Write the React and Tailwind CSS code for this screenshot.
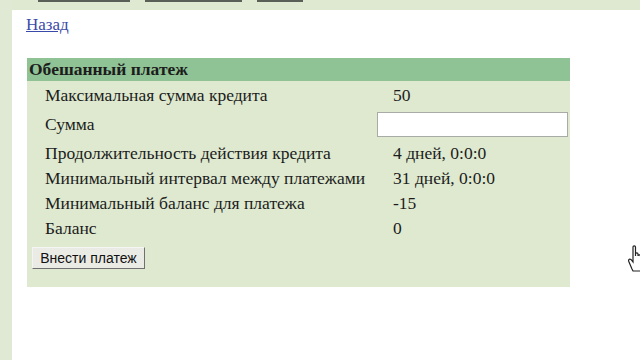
export default function App() {
  const rows = [
    ['Максимальная сумма кредита', '50'],
    ['Сумма', null],
    ['Продолжительность действия кредита', '4 дней, 0:0:0'],
    ['Минимальный интервал между платежами', '31 дней, 0:0:0'],
    ['Минимальный баланс для платежа', '-15'],
    ['Баланс', '0'],
  ];

  return (
    <div className="relative flex h-[360px] w-[640px] overflow-hidden bg-white text-[#1c1c1c]" style={{ fontFamily: '"Liberation Serif", "Times New Roman", serif' }}>
      {/* левая полоса */}
      <div className="w-[12px] shrink-0 bg-[#dfe9d3]"></div>

      <div className="flex flex-1 flex-col">
        {/* верхняя панель с кнопками (обрезана) */}
        <div className="flex h-[10px] items-start bg-[#dfe8d1]">
          <div className="ml-[26px] h-[2px] w-[92px] bg-[#5a5f58]"></div>
          <div className="ml-[15px] h-[2px] w-[97px] bg-[#5a5f58]"></div>
          <div className="ml-[15px] h-[2px] w-[46px] bg-[#5a5f58]"></div>
        </div>

        <a href="#" className="ml-[14px] mt-[6px] w-fit text-[17px] leading-[18px] text-[#3a4aa8] underline">
          Назад
        </a>

        <div className="ml-[15px] mt-[24px] w-[543px] bg-[#dee9cf] pb-[17px]">
          <div className="flex h-[23px] items-center bg-[#8fc294] pl-[2px] text-[17.5px] font-bold">
            Обешанный платеж
          </div>
          <div className="pt-[2px]">
            {rows.map(([label, value]) => (
              <div key={label} className={`flex items-center text-[17.5px] ${value === null ? 'h-[33px]' : 'h-[25px]'}`}>
                <div className="w-[350px] shrink-0 pl-[18px]">{label}</div>
                {value === null ? (
                  <input type="text" className="h-[25px] w-[191px] border border-[#a9aca6] bg-white outline-none" />
                ) : (
                  <div className="pl-[16px]">{value}</div>
                )}
              </div>
            ))}
          </div>
          <button
            className="ml-[5px] mt-[6px] h-[22px] w-[113px] border border-t-[#f4f4f4] border-l-[#f4f4f4] border-b-[#707070] border-r-[#707070] bg-[#ebebe6] text-[14px] text-[#111]"
            style={{ fontFamily: '"Liberation Sans", Arial, sans-serif' }}
          >
            Внести платеж
          </button>
        </div>
      </div>

      {/* курсор */}
      <svg className="absolute left-[627px] top-[243px]" width="16" height="30" viewBox="0 0 16 30" fill="white" stroke="#222" strokeWidth="1.2">
        <path d="M5 26 L2 19 C1 17 2 15.5 4 16.5 L6 19 L6 4 C6 2.5 8.5 2.5 8.5 4 L8.5 13 L8.5 11 C8.5 9.5 11 9.5 11 11 L11 13 C11 11.5 13.5 11.5 13.5 13 L16 13 L16 28 L6 28 Z" />
      </svg>
    </div>
  );
}
